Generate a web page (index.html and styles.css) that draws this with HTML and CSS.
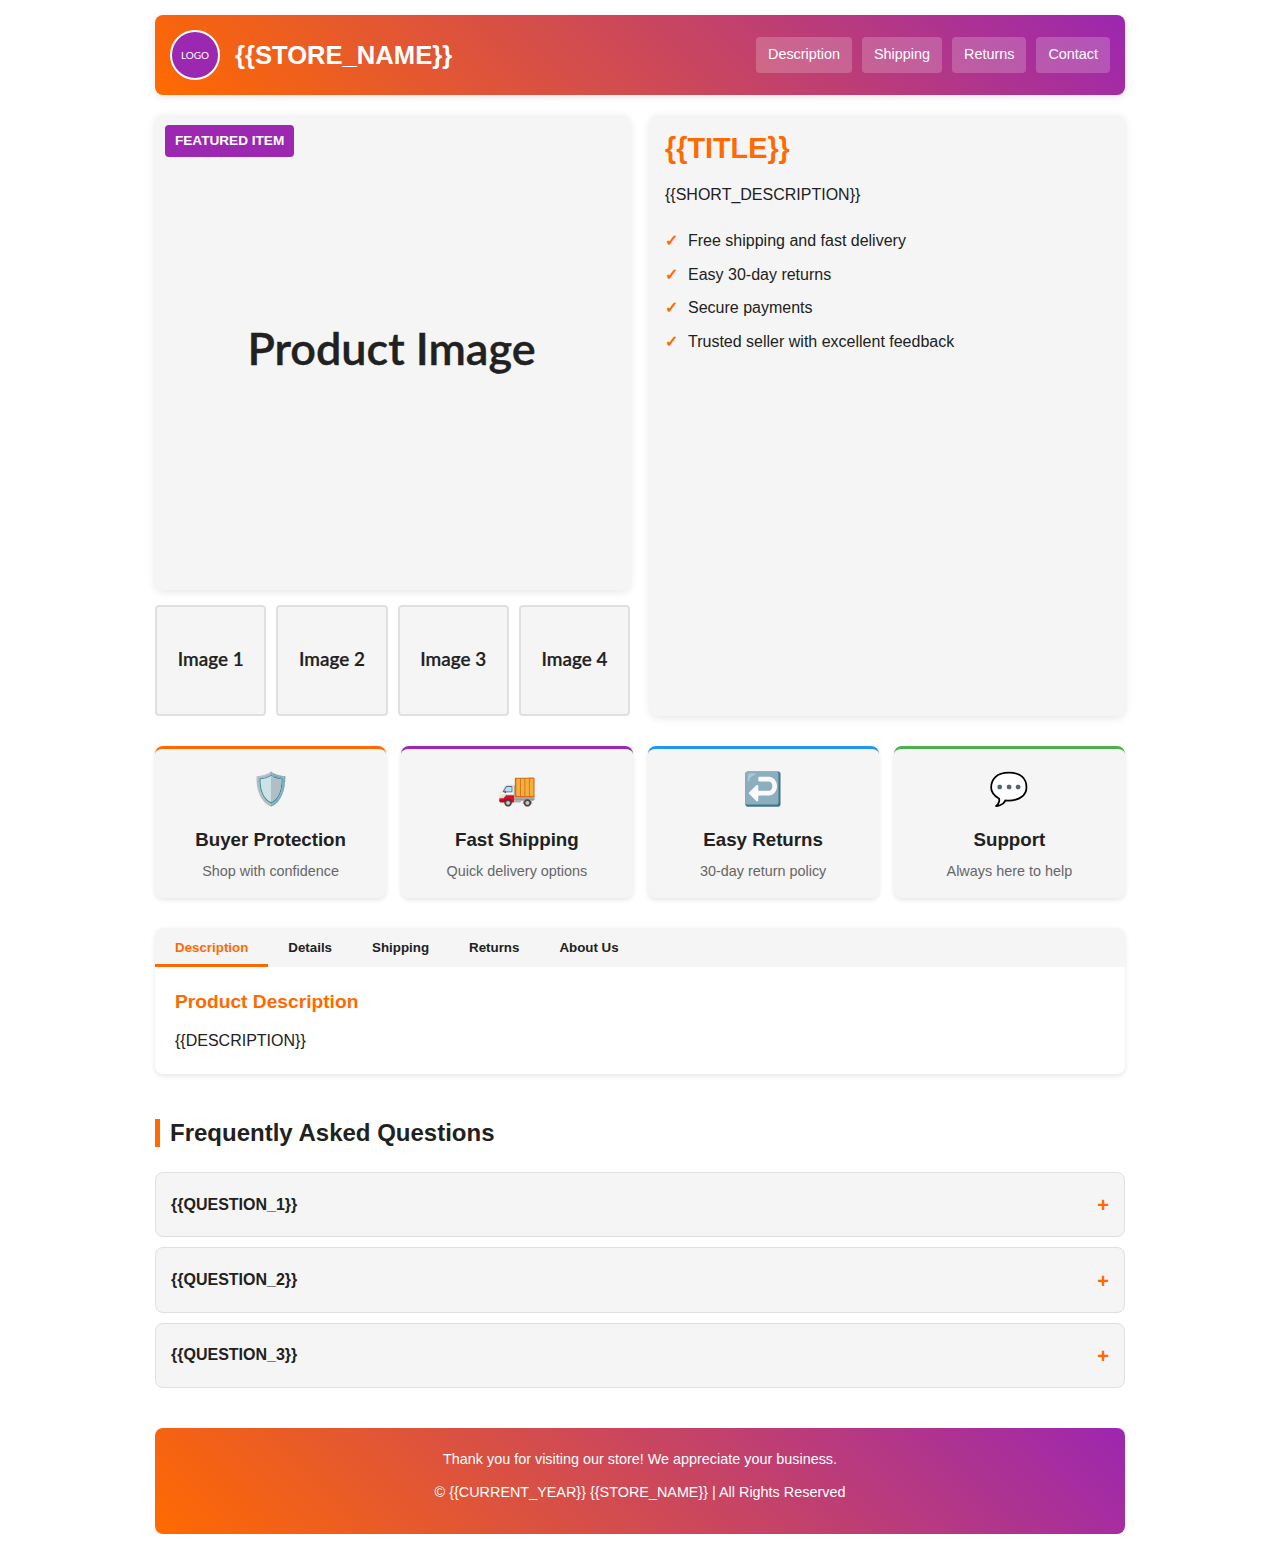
FILE: index.html
```html
<!DOCTYPE html>
<html lang="en">
<head>
  <meta charset="UTF-8" />
  <meta name="viewport" content="width=device-width, initial-scale=1.0"/>
  <title>{{TITLE}} - {{STORE_NAME}}</title>
  <link rel="stylesheet" href="styles.css">
</head>
<body>

  <div class="container">
    <header class="header">
      <div class="brand">
        <div class="logo">LOGO</div>
        <div class="store-name">{{STORE_NAME}}</div>
      </div>
      <nav class="nav">
        <a href="#">Description</a>
        <a href="#">Shipping</a>
        <a href="#">Returns</a>
        <a href="#">Contact</a>
      </nav>
    </header>

    <section class="product">
      <div class="gallery">
        <div class="main-image">
          <span class="badge">FEATURED ITEM</span>
          Product Image
        </div>
        <div class="thumbs">
          <div class="thumb">Image 1</div>
          <div class="thumb">Image 2</div>
          <div class="thumb">Image 3</div>
          <div class="thumb">Image 4</div>
        </div>
      </div>
      <div class="info">
        <h1>{{TITLE}}</h1>
        <p class="short">{{SHORT_DESCRIPTION}}</p>
        <ul class="perks">
          <li>Free shipping and fast delivery</li>
          <li>Easy 30-day returns</li>
          <li>Secure payments</li>
          <li>Trusted seller with excellent feedback</li>
        </ul>
      </div>
    </section>

    <section class="features">
      <div class="feature orange">
        <div class="feature-icon">🛡️</div>
        <h3>Buyer Protection</h3>
        <p>Shop with confidence</p>
      </div>
      <div class="feature purple">
        <div class="feature-icon">🚚</div>
        <h3>Fast Shipping</h3>
        <p>Quick delivery options</p>
      </div>
      <div class="feature blue">
        <div class="feature-icon">↩️</div>
        <h3>Easy Returns</h3>
        <p>30-day return policy</p>
      </div>
      <div class="feature green">
        <div class="feature-icon">💬</div>
        <h3>Support</h3>
        <p>Always here to help</p>
      </div>
    </section>

    <section class="tabs">
      <div class="tab-bar">
        <button class="tab active">Description</button>
        <button class="tab">Details</button>
        <button class="tab">Shipping</button>
        <button class="tab">Returns</button>
        <button class="tab">About Us</button>
      </div>
      <div class="tab-body">
        <h2>Product Description</h2>
        <p>{{DESCRIPTION}}</p>
      </div>
    </section>

    <section class="faq">
      <h2 class="faq-title">Frequently Asked Questions</h2>
      <div class="faq-item"><span>{{QUESTION_1}}</span><span class="plus">+</span></div>
      <div class="faq-item"><span>{{QUESTION_2}}</span><span class="plus">+</span></div>
      <div class="faq-item"><span>{{QUESTION_3}}</span><span class="plus">+</span></div>
    </section>

    <footer class="footer">
      <p>Thank you for visiting our store! We appreciate your business.</p>
      <p>© {{CURRENT_YEAR}} {{STORE_NAME}} | All Rights Reserved</p>
    </footer>
  </div>

</body>
</html>
```

FILE: styles.css
```css
* {
  box-sizing: border-box;
}

body {
  margin: 0;
  padding: 0;
  background: #fff;
  color: #212121;
  font-family: 'Liberation Sans', Arial, sans-serif;
  font-size: 16px;
  line-height: 1.6;
}

.container {
  width: 970px;
  margin: 0 auto;
  padding: 15px 0;
}

.header {
  height: 80px;
  padding: 15px;
  display: flex;
  align-items: center;
  justify-content: space-between;
  border-radius: 8px;
  background: linear-gradient(45deg, #ff6a00, #9c27b0);
  box-shadow: 0 2px 8px rgba(0, 0, 0, 0.1);
}

.brand {
  display: flex;
  align-items: center;
  gap: 15px;
}

.logo {
  width: 50px;
  height: 50px;
  display: flex;
  align-items: center;
  justify-content: center;
  border: 2px solid #fff;
  border-radius: 50%;
  background: #9c27b0;
  color: #fff;
  font-family: Lato, sans-serif;
  font-size: 10px;
}

.store-name {
  color: #fff;
  font-size: 25.6px;
  font-weight: bold;
}

.nav {
  display: flex;
  gap: 10px;
}

.nav a {
  padding: 7px 12px 9px;
  border-radius: 4px;
  background: rgba(255, 255, 255, 0.2);
  color: #fff;
  font-size: 14.4px;
  line-height: 20px;
  text-decoration: none;
}

.product {
  margin-top: 20px;
  display: grid;
  grid-template-columns: 1fr 1fr;
  gap: 20px;
}

.main-image {
  position: relative;
  height: 475px;
  padding-bottom: 9px;
  padding-right: 2px;
  display: flex;
  align-items: center;
  justify-content: center;
  border-radius: 8px;
  background: #f5f5f5;
  box-shadow: 0 2px 8px rgba(0, 0, 0, 0.1);
  font-family: 'Lato Semibold', Lato, sans-serif;
  font-size: 45px;
  -webkit-text-stroke: 0.4px #212121;
}

.badge {
  position: absolute;
  top: 10px;
  left: 10px;
  padding: 5px 10px;
  border-radius: 4px;
  background: #9c27b0;
  color: #fff;
  font-family: 'Liberation Sans', Arial, sans-serif;
  font-size: 13.6px;
  font-weight: bold;
  line-height: 22px;
  -webkit-text-stroke: 0;
}

.thumbs {
  margin-top: 15px;
  display: grid;
  grid-template-columns: repeat(4, 1fr);
  gap: 10px;
}

.thumb {
  height: 111.25px;
  padding-bottom: 3px;
  display: flex;
  align-items: center;
  justify-content: center;
  border: 2px solid #e0e0e0;
  border-radius: 4px;
  background: #f5f5f5;
  font-family: 'Lato Semibold', Lato, sans-serif;
  font-size: 18.9px;
  -webkit-text-stroke: 0.2px #212121;
}

.info {
  padding: 15px;
  border-radius: 8px;
  background: #f5f5f5;
  box-shadow: 0 2px 8px rgba(0, 0, 0, 0.1);
}

.info h1 {
  margin: 0;
  color: #ff6a00;
  font-size: 28.8px;
  line-height: 36px;
}

.short {
  margin: 16px 0 0;
}

.perks {
  margin: 16.4px 0 0;
  padding: 0;
  list-style: none;
}

.perks li {
  position: relative;
  padding: 4px 0 4px 23px;
  line-height: 25.6px;
}

.perks li::before {
  content: "✓";
  position: absolute;
  left: 0;
  color: #ff6a00;
  font-weight: bold;
}

.features {
  margin-top: 30px;
  display: grid;
  grid-template-columns: repeat(4, 1fr);
  gap: 15px;
}

.feature {
  padding: 15px;
  text-align: center;
  border-top: 3px solid;
  border-radius: 8px;
  background: #f5f5f5;
  box-shadow: 0 2px 5px rgba(0, 0, 0, 0.1);
}

.orange { border-top-color: #ff6a00; }
.purple { border-top-color: #9c27b0; }
.blue { border-top-color: #2196f3; }
.green { border-top-color: #4caf50; }

.feature-icon {
  font-size: 32px;
}

.feature h3 {
  margin: 10px 0 0;
  font-size: 18.72px;
}

.feature p {
  margin: 5px 0 0;
  color: #666;
  font-size: 14.4px;
}

.tabs {
  margin-top: 30px;
  border-radius: 8px;
  overflow: hidden;
  background: #fff;
  box-shadow: 0 2px 5px rgba(0, 0, 0, 0.1);
}

.tab-bar {
  display: flex;
  background: #f5f5f5;
}

.tab {
  padding: 12px 20px 9px;
  border: none;
  border-bottom: 3px solid transparent;
  background: none;
  color: #212121;
  font-family: inherit;
  font-size: 13.33px;
  font-weight: bold;
}

.tab.active {
  border-bottom-color: #ff6a00;
  color: #ff6a00;
}

.tab-body {
  padding: 20px;
}

.tab-body h2 {
  margin: 0;
  color: #ff6a00;
  font-size: 19.2px;
}

.tab-body p {
  margin: 10px 0 0;
}

.faq {
  margin-top: 45px;
}

.faq-title {
  margin: 0 0 25px;
  padding-left: 10px;
  border-left: 5px solid #ff6a00;
  font-size: 24px;
  line-height: 28px;
}

.faq-item {
  height: 65.4px;
  margin-top: 10px;
  padding: 0 15px;
  display: flex;
  align-items: center;
  justify-content: space-between;
  border: 1px solid #e0e0e0;
  border-radius: 8px;
  background: #f5f5f5;
  font-weight: bold;
}

.plus {
  padding-top: 2px;
  color: #ff6a00;
  font-size: 20px;
}

.footer {
  margin-top: 40px;
  padding: 20px 15px;
  text-align: center;
  border-radius: 8px;
  background: linear-gradient(45deg, #ff6a00, #9c27b0);
  color: #fff;
  font-size: 14.4px;
}

.footer p {
  margin: 0 0 10px;
}
```
